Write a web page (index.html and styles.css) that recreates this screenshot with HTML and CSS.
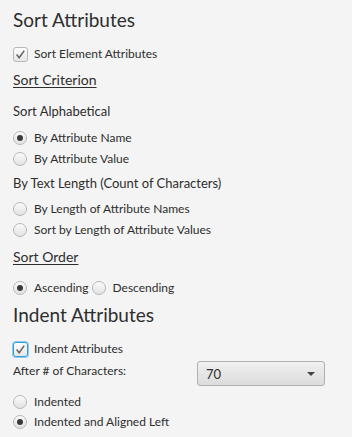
FILE: index.html
```html
<!DOCTYPE html>
<html lang="en">
<head>
    <meta charset="UTF-8">
    <meta name="viewport" content="width=device-width, initial-scale=1.0">
    <title>Sort Attributes</title>
    <link rel="stylesheet" href="styles.css">
</head>
<body>
    <div class="panel">
        <h2 class="title">Sort Attributes</h2>
        <label class="check row-check1"><span class="box"><svg viewBox="0 0 15 15"><path d="M3 7.5 L6 11.2 L11.8 3" /></svg></span>Sort Element Attributes</label>

        <div class="link row-crit">Sort Criterion</div>

        <div class="sub row-alpha">Sort Alphabetical</div>
        <label class="radio row-r1"><span class="dot on"></span>By Attribute Name</label>
        <label class="radio row-r2"><span class="dot"></span>By Attribute Value</label>

        <div class="sub row-len">By Text Length (Count of Characters)</div>
        <label class="radio row-r3"><span class="dot"></span>By Length of Attribute Names</label>
        <label class="radio row-r2"><span class="dot"></span>Sort by Length of Attribute Values</label>

        <div class="link row-order">Sort Order</div>
        <div class="inline row-asc">
            <label class="radio"><span class="dot on"></span>Ascending</label>
            <label class="radio"><span class="dot"></span>Descending</label>
        </div>

        <h2 class="title row-indent">Indent Attributes</h2>
        <label class="check focused row-check2"><span class="box"><svg viewBox="0 0 15 15"><path d="M3 7.5 L6 11.2 L11.8 3" /></svg></span>Indent Attributes</label>

        <div class="field row-after">
            <span class="field-label">After # of Characters:</span>
            <div class="combo"><span>70</span><span class="arrow"></span></div>
        </div>

        <label class="radio row-ind"><span class="dot"></span>Indented</label>
        <label class="radio row-last"><span class="dot on"></span>Indented and Aligned Left</label>
    </div>
</body>
</html>
```

FILE: styles.css
```css
* { margin: 0; padding: 0; box-sizing: border-box; }
body {
    font-family: Lato, "Open Sans", sans-serif;
    background: #f4f4f4;
    color: #2e2e2e;
    font-size: 12px;
}
.panel {
    display: flex;
    flex-direction: column;
    align-items: flex-start;
    padding: 9px 13px 0;
}
.title {
    font-weight: 400;
    font-size: 19px;
    height: 22px;
    line-height: 22px;
}
.check, .radio {
    display: flex;
    align-items: center;
    height: 16px;
    line-height: 16px;
    white-space: nowrap;
}
.box {
    width: 15px;
    height: 15px;
    border: 1px solid #b8b8b8;
    border-radius: 3px;
    background: linear-gradient(#fdfdfd, #e6e6e6);
    margin-right: 6px;
    display: flex;
}
.box svg { width: 13px; height: 13px; }
.box path { fill: none; stroke: #5f5f5f; stroke-width: 1.7; }
.focused .box {
    border-color: #2d9fd9;
    box-shadow: 0 0 0 1px #8cc8ea;
}
.dot {
    width: 14px;
    height: 14px;
    border: 1px solid #b8b8b8;
    border-radius: 50%;
    background: linear-gradient(#fbfbfb, #e2e2e2);
    margin-right: 7px;
    display: flex;
    align-items: center;
    justify-content: center;
}
.dot.on::after {
    content: "";
    width: 6px;
    height: 6px;
    border-radius: 50%;
    background: #3a3a3a;
}
.link {
    font-size: 14px;
    height: 16px;
    line-height: 16px;
    text-decoration: underline;
    text-underline-offset: 2px;
}
.sub {
    font-size: 13px;
    height: 18px;
    line-height: 18px;
}
.inline { display: flex; gap: 3px; }
.field {
    display: flex;
    align-items: flex-start;
    width: 100%;
}
.field-label {
    width: 184px;
    line-height: 16px;
    padding-top: 2px;
}
.combo {
    width: 128px;
    height: 25px;
    border: 1px solid #b0b0b0;
    border-radius: 3px;
    background: linear-gradient(#f0f0f0, #dcdcdc);
    display: flex;
    align-items: center;
    justify-content: space-between;
    padding: 0 9px 0 8px;
    font-size: 13px;
}
.arrow {
    width: 0;
    height: 0;
    border-left: 4px solid transparent;
    border-right: 4px solid transparent;
    border-top: 4px solid #444;
}

.row-check1 { margin-top: 15px; }
.row-crit { margin-top: 10px; }
.row-alpha { margin-top: 14px; }
.row-r1 { margin-top: 10px; }
.row-r2 { margin-top: 5px; }
.row-len { margin-top: 7px; }
.row-r3 { margin-top: 9px; }
.row-order { margin-top: 11px; }
.row-asc { margin-top: 15px; }
.row-indent { margin-top: 8px; }
.row-check2 { margin-top: 15px; }
.row-after { margin-top: 4px; }
.row-ind { margin-top: 8px; }
.row-last { margin-top: 4px; }
```
